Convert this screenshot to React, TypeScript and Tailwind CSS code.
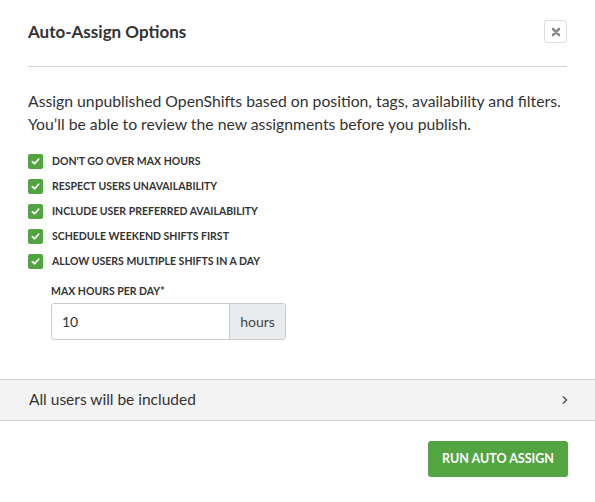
import React from "react";

const options = [
  "Don't go over max hours",
  "Respect users unavailability",
  "Include user preferred availability",
  "Schedule weekend shifts first",
  "Allow users multiple shifts in a day",
];

function CheckBox() {
  return (
    <span className="flex h-[15px] w-[15px] shrink-0 items-center justify-center rounded-[2px] bg-[#51a43f]">
      <svg width="9" height="9" viewBox="0 0 10 10" fill="none">
        <path d="M1.5 5.2 L4 7.5 L8.5 2.5" stroke="#fff" strokeWidth="2" strokeLinecap="round" strokeLinejoin="round" />
      </svg>
    </span>
  );
}

export default function App() {
  return (
    <div
      className="flex h-[502px] w-[595px] flex-col bg-white text-[#333]"
      style={{ fontFamily: "Lato, 'Noto Sans', sans-serif" }}
    >
      <div className="mx-[28px] flex h-[67px] items-center justify-between border-b border-[#d0d0d0]">
        <h1 className="mt-[-3px] text-[17px] font-bold text-[#333]">Auto-Assign Options</h1>
        <button className="mt-[-3px] flex h-[23px] w-[23px] items-center justify-center rounded-[3px] border border-[#ddd] bg-white">
          <svg width="10" height="10" viewBox="0 0 10 10">
            <path d="M2 2 L8 8 M8 2 L2 8" stroke="#8a8a8a" strokeWidth="2.6" strokeLinecap="round" />
          </svg>
        </button>
      </div>

      <div className="px-[28px] pt-[22px]">
        <p className="text-[15.75px] leading-[23px] text-[#333]">
          Assign unpublished OpenShifts based on position, tags, availability and filters.
          <br />
          You’ll be able to review the new assignments before you publish.
        </p>

        <div className="mt-[19px] flex flex-col gap-[10px]">
          {options.map((o) => (
            <label key={o} className="flex h-[15px] items-center gap-[9px]">
              <CheckBox />
              <span className="text-[10.5px] font-bold uppercase leading-[15px] text-[#333]">{o}</span>
            </label>
          ))}
        </div>

        <div className="ml-[23px] mt-[15px]">
          <div className="text-[10.5px] font-bold uppercase leading-[14px] text-[#333]">Max hours per day*</div>
          <div className="mt-[5px] flex h-[37px] w-[235px] rounded-[3px] border border-[#ccc]">
            <input
              readOnly
              value="10"
              className="min-w-0 flex-1 rounded-l-[3px] bg-white px-[10px] text-[14px] text-[#333] outline-none"
            />
            <span className="flex w-[56px] items-center justify-center rounded-r-[3px] border-l border-[#ccc] bg-[#e9ecef] text-[14px] text-[#444]">
              hours
            </span>
          </div>
        </div>
      </div>

      <div className="mt-[39px] flex h-[42px] items-center justify-between border-y border-[#cfcfcf] bg-[#f4f4f4] pl-[29px] pr-[26px]">
        <span className="text-[15.5px] text-[#333]">All users will be included</span>
        <svg width="8" height="10" viewBox="0 0 8 10">
          <path d="M2 1.5 L5.5 5 L2 8.5" stroke="#555" strokeWidth="1.5" fill="none" />
        </svg>
      </div>

      <div className="flex justify-end px-[27px] pt-[20px]">
        <button className="flex h-[36px] items-center rounded-[3px] bg-[#52a540] px-[14px] text-[12.5px] font-bold text-white">
          RUN AUTO ASSIGN
        </button>
      </div>
    </div>
  );
}
